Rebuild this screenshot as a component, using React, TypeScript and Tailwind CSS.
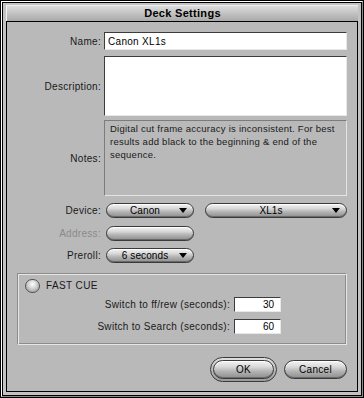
import React from "react";

const font = "font-['Liberation_Sans',Arial,sans-serif]";
const pill =
  "rounded-full border border-[#3a3a3a] bg-[linear-gradient(to_bottom,#f4f4f4_0%,#d8d8d8_35%,#b4b4b4_60%,#8e8e8e_100%)] shadow-[inset_0_1px_0_#ffffff,inset_0_-1px_0_#6a6a6a]";

function Popup({ label, className }: { label?: string; className: string }) {
  return (
    <div className={`relative flex h-[15px] items-center justify-center pr-[10px] ${pill} ${className}`}>
      {label && <span className="text-[10px] leading-none tracking-[0.1px] text-black">{label}</span>}
      {label && (
        <span className="absolute right-[6px] top-[4px] h-0 w-0 border-x-[4px] border-t-[5px] border-x-transparent border-t-black" />
      )}
    </div>
  );
}

function Label({ text, muted }: { text: string; muted?: boolean }) {
  return (
    <div className={`pr-[3px] text-right text-[10px] tracking-[0.3px] ${muted ? "text-[#8a8a8a]" : "text-[#1a1a1a]"}`}>
      {text}
    </div>
  );
}

const field = "bg-white border border-t-[#3c3c3c] border-l-[#3c3c3c] border-b-[#e8e8e8] border-r-[#e8e8e8]";

export default function App() {
  return (
    <div className={`h-[398px] w-[364px] bg-black p-px ${font}`}>
      <div className="h-full border border-t-white border-l-white border-b-[#8a8a8a] border-r-[#8a8a8a]">
        <div className="h-full border border-black">
          <div className="flex h-full flex-col bg-[#c2c2c2] px-[3px] pb-[3px] pt-[2px]">
            <div className="flex h-[16px] items-center justify-center border-t border-l border-t-[#efefef] border-l-[#efefef] bg-[linear-gradient(to_bottom,#dcdcdc,#bdbdbd_60%,#a9a9a9)]">
              <span className="text-[11px] font-bold leading-none tracking-[0.3px] text-black">Deck Settings</span>
            </div>
            <div className="flex-1 border border-black bg-[#b9b9b9] pr-[10px] pt-[10px]">
              <div className="grid grid-cols-[97px_1fr] items-center">
                <Label text="Name:" />
                <div className={`h-[18px] ${field} flex items-center pl-[3px] text-[10px] tracking-[0.3px] text-black`}>
                  Canon XL1s
                </div>
              </div>
              <div className="mt-[6px] grid grid-cols-[97px_1fr] items-center">
                <Label text="Description:" />
                <div className={`h-[60px] ${field}`} />
              </div>
              <div className="mt-[4px] grid grid-cols-[97px_1fr] items-center">
                <Label text="Notes:" />
                <div className="h-[76px] border border-t-[#7c7c7c] border-l-[#7c7c7c] border-b-[#e4e4e4] border-r-[#e4e4e4] px-[5px] pt-[1px] text-[9.5px] leading-[13px] tracking-[0.25px] text-[#1a1a1a]">
                  Digital cut frame accuracy is inconsistent. For best results add black to the beginning &amp; end of the
                  sequence.
                </div>
              </div>
              <div className="mt-[7px] grid grid-cols-[97px_1fr] items-center">
                <Label text="Device:" />
                <div className="flex gap-[11px] pl-[2px]">
                  <Popup label="Canon" className="w-[88px]" />
                  <Popup label="XL1s" className="w-[142px]" />
                </div>
              </div>
              <div className="mt-[8px] grid grid-cols-[97px_1fr] items-center">
                <Label text="Address:" muted />
                <div className="pl-[2px]">
                  <Popup className="w-[88px] bg-[linear-gradient(to_bottom,#e8e8e8_0%,#d4d4d4_40%,#f0f0f0_55%,#b8b8b8_70%,#8e8e8e_100%)]" />
                </div>
              </div>
              <div className="mt-[7px] grid grid-cols-[97px_1fr] items-center">
                <Label text="Preroll:" />
                <div className="pl-[2px]">
                  <Popup label="6 seconds" className="w-[88px]" />
                </div>
              </div>

              <div className="ml-[10px] mt-[10px] h-[72px] border border-t-[#8c8c8c] border-l-[#8c8c8c] border-b-[#e6e6e6] border-r-[#e6e6e6] shadow-[inset_1px_1px_0_#e6e6e6,inset_-1px_-1px_0_#8c8c8c]">
                <div className="flex items-center gap-[6px] pl-[7px] pt-[5px]">
                  <div className="h-[14px] w-[15px] rounded-full border border-[#555] bg-[radial-gradient(circle_at_50%_35%,#ffffff,#cfcfcf_45%,#8a8a8a)]" />
                  <span className="text-[10px] leading-none tracking-[0.4px] text-[#1a1a1a]">FAST CUE</span>
                </div>
                <div className="mt-[4px] flex items-center justify-end pr-[65px]">
                  <span className="mr-[4px] text-[10px] tracking-[0.3px] text-[#1a1a1a]">Switch to ff/rew (seconds):</span>
                  <div className={`flex h-[15px] w-[47px] items-center justify-end pr-[6px] text-[10px] text-black ${field}`}>30</div>
                </div>
                <div className="mt-[7px] flex items-center justify-end pr-[65px]">
                  <span className="mr-[4px] text-[10px] tracking-[0.3px] text-[#1a1a1a]">Switch to Search (seconds):</span>
                  <div className={`flex h-[15px] w-[47px] items-center justify-end pr-[6px] text-[10px] text-black ${field}`}>60</div>
                </div>
              </div>

              <div className="mt-[12px] flex items-center justify-end gap-[7px]">
                <div className="rounded-full border border-[#3a3a3a] bg-[linear-gradient(to_bottom,#e0e0e0,#9a9a9a)] p-[2px]">
                  <div className={`flex h-[19px] w-[61px] items-center justify-center ${pill}`}>
                    <span className="text-[10px] tracking-[0.3px] text-black">OK</span>
                  </div>
                </div>
                <div className={`flex h-[19px] w-[63px] items-center justify-center ${pill}`}>
                  <span className="text-[10px] tracking-[0.3px] text-black">Cancel</span>
                </div>
              </div>
            </div>
          </div>
        </div>
      </div>
    </div>
  );
}
